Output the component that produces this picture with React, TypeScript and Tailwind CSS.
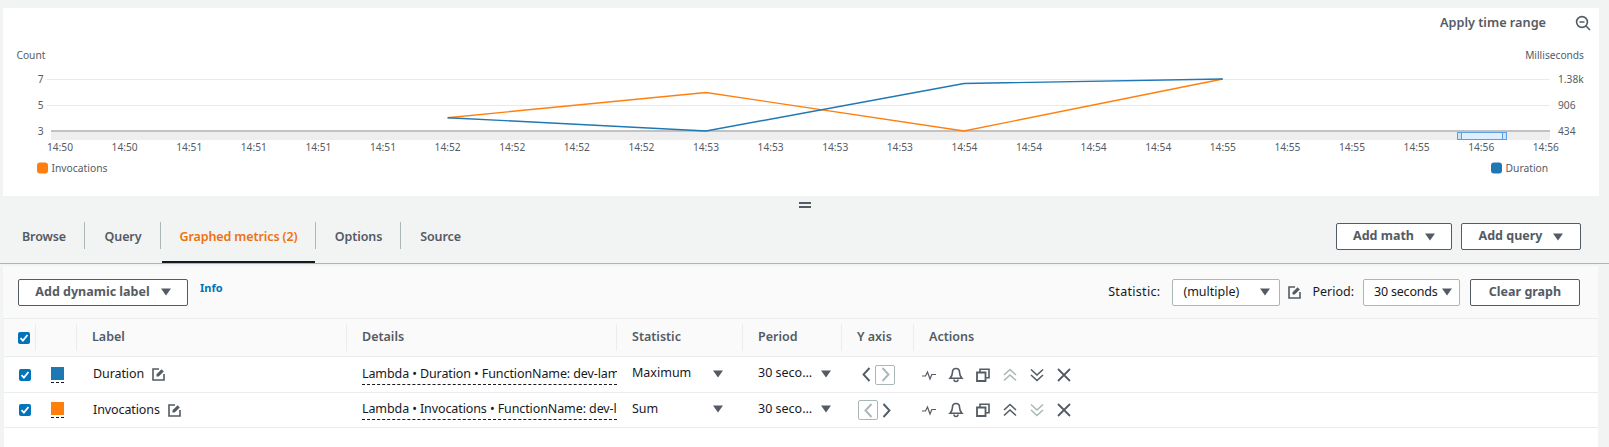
const ticks = [
  "14:50", "14:50", "14:51", "14:51", "14:51", "14:51", "14:52", "14:52",
  "14:52", "14:52", "14:53", "14:53", "14:53", "14:53", "14:54", "14:54",
  "14:54", "14:54", "14:55", "14:55", "14:55", "14:55", "14:56", "14:56",
];

const font = "font-['Noto_Sans',sans-serif]";

function Caret({ className = "" }: { className?: string }) {
  return (
    <svg width="10" height="8" viewBox="0 0 10 8" className={"shrink-0 " + className}>
      <path d="M0 0.5h10L5 7.5z" fill="#545b64" />
    </svg>
  );
}

function EditIcon() {
  return (
    <svg width="13" height="13" viewBox="0 0 13 13" fill="none" stroke="#545b64" strokeWidth="1.6" className="shrink-0">
      <path d="M7 1H1v11h11V6" />
      <path d="M4.5 8.5V6.3L9.6 1.2l2.2 2.2L6.7 8.5z" fill="#545b64" stroke="none" />
    </svg>
  );
}

function Check() {
  return (
    <span className="flex size-[12px] shrink-0 items-center justify-center rounded-[2px] bg-[#0073bb]">
      <svg width="10" height="10" viewBox="0 0 10 10" fill="none" stroke="#fff" strokeWidth="1.8">
        <path d="M1.5 5.2l2.4 2.4L8.5 2" />
      </svg>
    </span>
  );
}

function Sep() {
  return <span className="absolute right-0 top-[5px] h-[27px] w-px bg-[#eaeded]" />;
}

function Btn({ label, w, caret = true }: { label: string; w: string; caret?: boolean }) {
  return (
    <button className={"flex h-[27px] items-center justify-center gap-[11px] rounded-[2px] border border-[#545b64] bg-white text-[12.5px] font-bold text-[#545b64] " + w}>
      {label}
      {caret && <Caret />}
    </button>
  );
}

function Tab({ label, w, active, last }: { label: string; w: string; active?: boolean; last?: boolean }) {
  return (
    <div className={"relative flex h-full items-start justify-center pt-[6px] " + w}>
      <span className={"text-[12.5px] font-semibold tracking-[-0.1px] " + (active ? "text-[#ec7211]" : "text-[#545b64]")}>{label}</span>
      {!last && <span className="absolute right-0 top-0 h-[27px] w-px bg-[#aab7b8]" />}
      {active && <span className="absolute bottom-0 left-[1px] right-[1px] h-[2px] bg-[#16191f]" />}
    </div>
  );
}

function Chart() {
  return (
    <svg viewBox="3 38 1596 158" className="block h-[158px] w-full">
      <g fontFamily="'Noto Sans',sans-serif" fontSize="10.2" fill="#545b64">
        <text x="16.5" y="59">Count</text>
        <text x="1584" y="59" textAnchor="end">Milliseconds</text>
        {[["7", 79], ["5", 105], ["3", 131]].map(([t, y]) => (
          <text key={t} x="43.5" y={Number(y) + 4} textAnchor="end">{t}</text>
        ))}
        {[["1.38k", 79], ["906", 105], ["434", 131]].map(([t, y]) => (
          <text key={t} x="1558" y={Number(y) + 4}>{t}</text>
        ))}
        {ticks.map((t, i) => (
          <text key={i} x={60 + i * 64.6} y="151" textAnchor="middle">{t}</text>
        ))}
        <text x="51.5" y="172" fontSize="10.3">Invocations</text>
        <text x="1505.5" y="172" fontSize="10.3">Duration</text>
      </g>
      <rect x="37" y="162.5" width="11" height="11" rx="3" fill="#ff7f0e" />
      <rect x="1491" y="162.5" width="11" height="11" rx="3" fill="#1f77b4" />
      <path d="M46.5 79.5H1550M46.5 105.5H1550" stroke="#eaeaea" />
      <rect x="51" y="130" width="1499" height="10" fill="#eeeeee" />
      <rect x="51" y="130" width="1499" height="2" fill="#c2c2c2" />
      <rect x="1457.5" y="132.5" width="49" height="7" fill="#e0efff" stroke="#5a9fe0" />
      <rect x="1457.5" y="132.5" width="4" height="7" fill="#cfe3f8" stroke="#5a9fe0" />
      <rect x="1502.5" y="132.5" width="4" height="7" fill="#cfe3f8" stroke="#5a9fe0" />
      <path d="M447.6 117.7L706 92.5L964 131L1222.7 79" fill="none" stroke="#ff7f0e" strokeWidth="1.4" />
      <path d="M447.6 117.7L706 131L964 83.5L1222.7 79" fill="none" stroke="#1f77b4" strokeWidth="1.4" />
    </svg>
  );
}

function Chevron({ dir, boxed }: { dir: "left" | "right"; boxed?: boolean }) {
  const d = dir === "left" ? "M11.5 3L5.5 9.5L11.5 16" : "M5.5 3L11.5 9.5L5.5 16";
  return (
    <span className={"flex h-[20px] items-center justify-center rounded-[2px] " + (boxed ? "w-[20px] border border-[#aab7b8]" : "w-[17px]")}>
      <svg width="17" height="19" viewBox="0 0 17 19" fill="none" stroke={boxed ? "#aab7b8" : "#545b64"} strokeWidth="1.9">
        <path d={d} />
      </svg>
    </span>
  );
}

function ActionIcon({ children }: { children: React.ReactNode }) {
  return (
    <span className="flex h-[16px] w-[27px] shrink-0 items-center justify-center">
      <svg width="16" height="16" viewBox="0 0 16 16" fill="none" stroke="#545b64" strokeWidth="1.6">
        {children}
      </svg>
    </span>
  );
}

function Actions({ upDim, downDim }: { upDim?: boolean; downDim?: boolean }) {
  return (
    <div className="flex items-center pl-[1px]">
      <ActionIcon>
        <path d="M1 9h3.5l2-4 2.5 7 1.8-4.5H15" strokeWidth="1.2" />
      </ActionIcon>
      <ActionIcon>
        <path d="M8 1.5c-2.6 0-3.6 2-3.6 4.2 0 2.7-1 3.8-2.4 5.6h12c-1.4-1.8-2.4-2.9-2.4-5.6 0-2.2-1-4.2-3.6-4.2z" />
        <path d="M6 12.5a2 2 0 0 0 4 0" />
      </ActionIcon>
      <ActionIcon>
        <path d="M2 5.5h8.5V14H2z" strokeWidth="1.8" />
        <path d="M5 5V2.2h9v8.6h-3" />
      </ActionIcon>
      <ActionIcon>
        <g stroke={upDim ? "#aab7b8" : "#545b64"}>
          <path d="M2 8l6-5.5L14 8" />
          <path d="M2 13.5L8 8l6 5.5" />
        </g>
      </ActionIcon>
      <ActionIcon>
        <g stroke={downDim ? "#aab7b8" : "#545b64"}>
          <path d="M2 2.5L8 8l6-5.5" />
          <path d="M2 8l6 5.5L14 8" />
        </g>
      </ActionIcon>
      <ActionIcon>
        <path d="M2 2l12 12M14 2L2 14" strokeWidth="1.8" />
      </ActionIcon>
    </div>
  );
}

const gridCols = "grid grid-cols-[32px_41px_270px_270px_126px_99px_72px_1fr]";

function HeadCell({ label, noSep }: { label?: string; noSep?: boolean }) {
  return (
    <div className="relative flex h-full items-center pl-[15px] text-[12.5px] font-semibold text-[#545b64]">
      {label}
      {!noSep && <Sep />}
    </div>
  );
}

function Row({ label, color, details, stat, h, left, upDim, downDim }: {
  label: string;
  color: string;
  details: string;
  stat: string;
  h: string;
  left?: boolean;
  upDim?: boolean;
  downDim?: boolean;
}) {
  return (
    <div className={gridCols + " items-center border-b border-[#eaeded] bg-white text-[12.5px] text-[#16191f] " + h}>
      <div className="pl-[15px]"><Check /></div>
      <div className="pl-[15px]">
        <div className="flex h-[16px] w-[13px] flex-col justify-between">
          <span className={"h-[13px] w-[13px] " + color} />
          <span className="border-b border-dashed border-[#16191f]" />
        </div>
      </div>
      <div className="flex items-center gap-[8px] pl-[16px]">
        <span className="tracking-[-0.1px]">{label}</span>
        <EditIcon />
      </div>
      <div className="pl-[15px]">
        <div className="overflow-hidden whitespace-nowrap border-b border-dashed border-[#16191f] pb-[1px] leading-[18px] tracking-[-0.1px]">{details}</div>
      </div>
      <div className="flex items-center justify-between pb-[2px] pl-[15px] pr-[20px]">
        <span>{stat}</span>
        <Caret />
      </div>
      <div className="flex items-center justify-between pb-[2px] pl-[15px] pr-[11px]">
        <span>30 seco…</span>
        <Caret />
      </div>
      <div className="flex items-center pl-[16px]">
        <Chevron dir="left" boxed={left} />
        <Chevron dir="right" boxed={!left} />
      </div>
      <Actions upDim={upDim} downDim={downDim} />
    </div>
  );
}

export default function App() {
  return (
    <div className={"h-[447px] w-[1609px] overflow-hidden bg-[#f2f3f3] pt-[8px] " + font}>
      <section className="ml-[3px] h-[188px] w-[1596px] bg-white">
        <div className="flex h-[30px] items-center justify-end">
          <span className="text-[12.7px] font-semibold text-[#545b64]">Apply time range</span>
          <svg width="16" height="16" viewBox="0 0 16 16" fill="none" stroke="#545b64" strokeWidth="1.6" className="ml-[29px] mr-[8px]">
            <circle cx="7" cy="7" r="5.4" />
            <path d="M4.5 7h5M11 11l4 4" />
          </svg>
        </div>
        <Chart />
      </section>

      <div className="flex h-[18px] items-center justify-center">
        <span className="flex w-[12px] flex-col gap-[2px]">
          <span className="h-[2px] bg-[#545b64]" />
          <span className="h-[2px] bg-[#545b64]" />
        </span>
      </div>

      <div className="flex h-[50px] items-end justify-between border-b border-[#aab7b8] pr-[28px]">
        <div className="ml-[3px] flex h-[41px]">
          <Tab label="Browse" w="w-[82px]" />
          <Tab label="Query" w="w-[76px]" />
          <Tab label="Graphed metrics (2)" w="w-[155px]" active />
          <Tab label="Options" w="w-[85px]" />
          <Tab label="Source" w="w-[79px]" last />
        </div>
        <div className="flex gap-[9px] pb-[13px]">
          <Btn label="Add math" w="w-[116px]" />
          <Btn label="Add query" w="w-[120px]" />
        </div>
      </div>

      <div className="ml-[3px] mt-[2px] flex h-[53px] w-[1595px] items-center justify-between border-b border-[#eaeded] bg-[#fafafa] pl-[15px] pr-[18px] text-[12.5px]">
        <div className="flex items-start gap-[12px]">
          <Btn label="Add dynamic label" w="w-[170px]" />
          <a className="mt-[1px] text-[11px] font-bold text-[#0073bb]">Info</a>
        </div>
        <div className="flex items-center whitespace-nowrap text-[#16191f]">
          <span className="tracking-[0.3px]">Statistic:</span>
          <div className="ml-[12px] flex h-[27px] w-[108px] items-center justify-between rounded-[2px] border border-[#aab7b8] bg-white pl-[10px] pr-[9px]">
            <span>(multiple)</span>
            <Caret />
          </div>
          <span className="ml-[8px] mr-[11px]"><EditIcon /></span>
          <span>Period:</span>
          <div className="ml-[9px] flex h-[27px] w-[97px] items-center justify-between rounded-[2px] border border-[#aab7b8] bg-white pl-[10px] pr-[7px]">
            <span className="tracking-[-0.2px]">30 seconds</span>
            <Caret />
          </div>
          <div className="ml-[10px]"><Btn label="Clear graph" w="w-[110px]" caret={false} /></div>
        </div>
      </div>

      <div className="ml-[4px] w-[1594px] bg-white pb-[30px]">
        <div className={gridCols + " h-[38px] items-center border-b border-[#eaeded] bg-[#fafafa]"}>
          <div className="relative flex h-full items-center pl-[14px]"><Check /><Sep /></div>
          <HeadCell />
          <HeadCell label="Label" />
          <HeadCell label="Details" />
          <HeadCell label="Statistic" />
          <HeadCell label="Period" />
          <HeadCell label="Y axis" />
          <HeadCell label="Actions" noSep />
        </div>
        <Row label="Duration" color="bg-[#1f77b4]" details="Lambda • Duration • FunctionName: dev-lam" stat="Maximum" h="h-[36px]" upDim />
        <Row label="Invocations" color="bg-[#ff7f0e]" details="Lambda • Invocations • FunctionName: dev-la" stat="Sum" h="h-[35px]" left downDim />
      </div>
    </div>
  );
}
